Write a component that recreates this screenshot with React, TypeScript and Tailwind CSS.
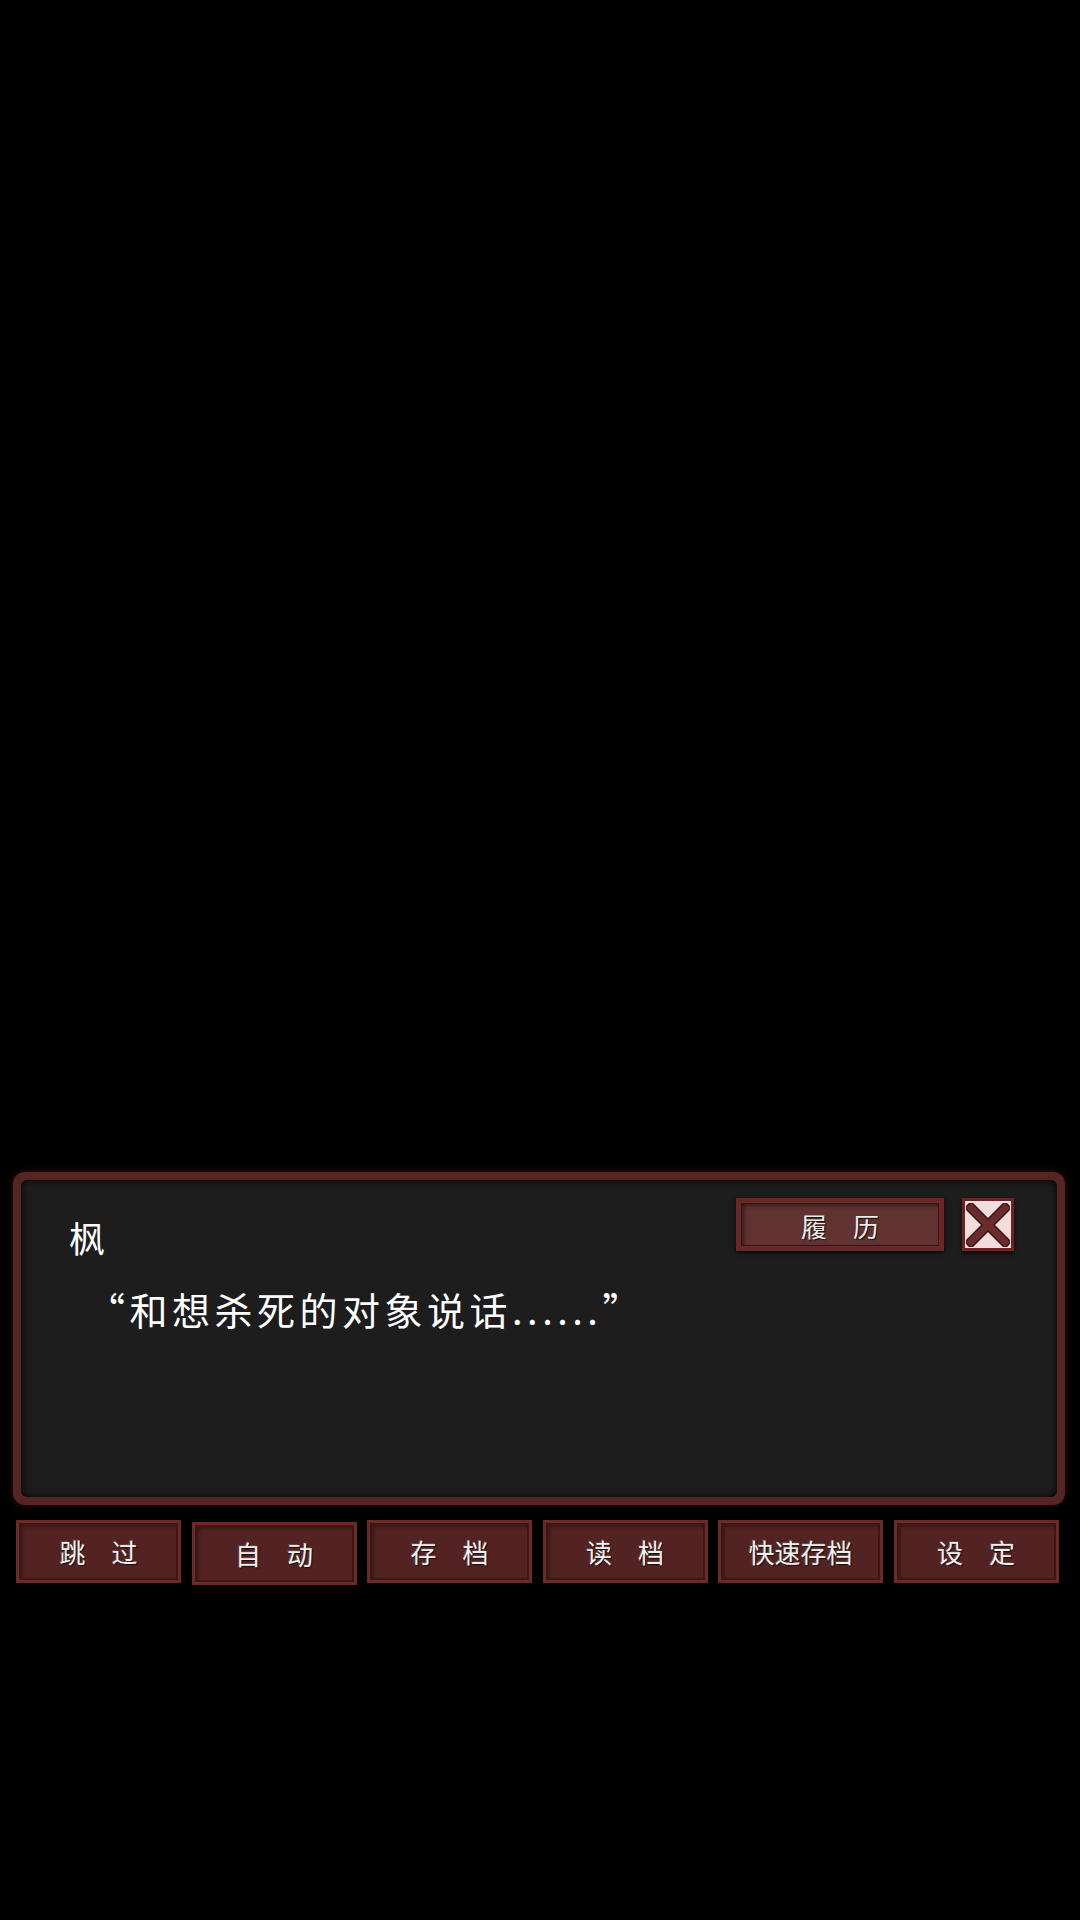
import React from 'react';

const font = { fontFamily: '"Noto Sans CJK SC", "Noto Sans", sans-serif' };

const menu = ['跳　过', '自　动', '存　档', '读　档', '快速存档', '设　定'];

function MenuButton({ label, offset }: { label: string; offset?: boolean }) {
  return (
    <button
      className={`flex h-[63px] w-[165px] items-center justify-center border-[3px] border-[#6a2a2a] bg-[#532323] shadow-[inset_0_0_0_2px_#3e1616,inset_3px_3px_4px_rgba(0,0,0,0.45),0_0_4px_rgba(0,0,0,0.8)] ${offset ? 'mt-[2px]' : ''}`}
    >
      <span className="text-[26px] leading-none text-[#f1f1f1] [text-shadow:1px_1px_1px_#1a0a0a,-1px_-1px_0_rgba(255,255,255,0.15)]">
        {label}
      </span>
    </button>
  );
}

export default function App() {
  return (
    <div className="flex min-h-[1920px] w-[1080px] flex-col bg-black pt-[1172px]" style={font}>
      {/* 对话框 */}
      <div className="ml-[13px] mr-[15px] h-[333px] rounded-[12px] bg-[#552424] p-[8px] shadow-[0_0_6px_rgba(130,40,40,0.45)]">
        <div className="flex h-full flex-col rounded-[6px] bg-[#1d1d1d] shadow-[inset_0_0_8px_rgba(0,0,0,0.9)]">
          <div className="flex items-start justify-between pl-[48px] pr-[43px] pt-[18px]">
            <div className="mt-[21px] text-[36px] leading-none text-white">枫</div>
            <div className="flex gap-[18px]">
              <button className="flex h-[53px] w-[208px] items-center justify-center border-[5px] border-[#682828] bg-[#613232] shadow-[inset_0_0_0_1px_#3a1414,inset_3px_3px_4px_rgba(0,0,0,0.45),0_2px_4px_rgba(0,0,0,0.7)]">
                <span className="mt-[2px] text-[26px] leading-none text-[#ececec] [text-shadow:1px_1px_1px_#1a0a0a]">
                  履　历
                </span>
              </button>
              <button className="flex h-[53px] w-[52px] items-center justify-center border-[3px] border-[#6a2424] bg-[#f3dcdc] shadow-[0_2px_4px_rgba(0,0,0,0.7)]">
                <svg width="44" height="44" viewBox="0 0 44 44">
                  <g strokeLinecap="square">
                    <path d="M5 5 L39 39 M39 5 L5 39" stroke="#3a1414" strokeWidth="10" />
                    <path d="M5 5 L39 39 M39 5 L5 39" stroke="#6b2b2b" strokeWidth="7" />
                  </g>
                </svg>
              </button>
            </div>
          </div>
          <div className="mt-[35px] pl-[66px] text-[38px] leading-none tracking-[4.5px] text-white">
            “和想杀死的对象说话......”
          </div>
        </div>
      </div>

      {/* 菜单 */}
      <div className="ml-[16px] mt-[15px] flex items-start gap-[10.5px]">
        {menu.map((m, i) => (
          <MenuButton key={m} label={m} offset={i === 1} />
        ))}
      </div>
    </div>
  );
}
